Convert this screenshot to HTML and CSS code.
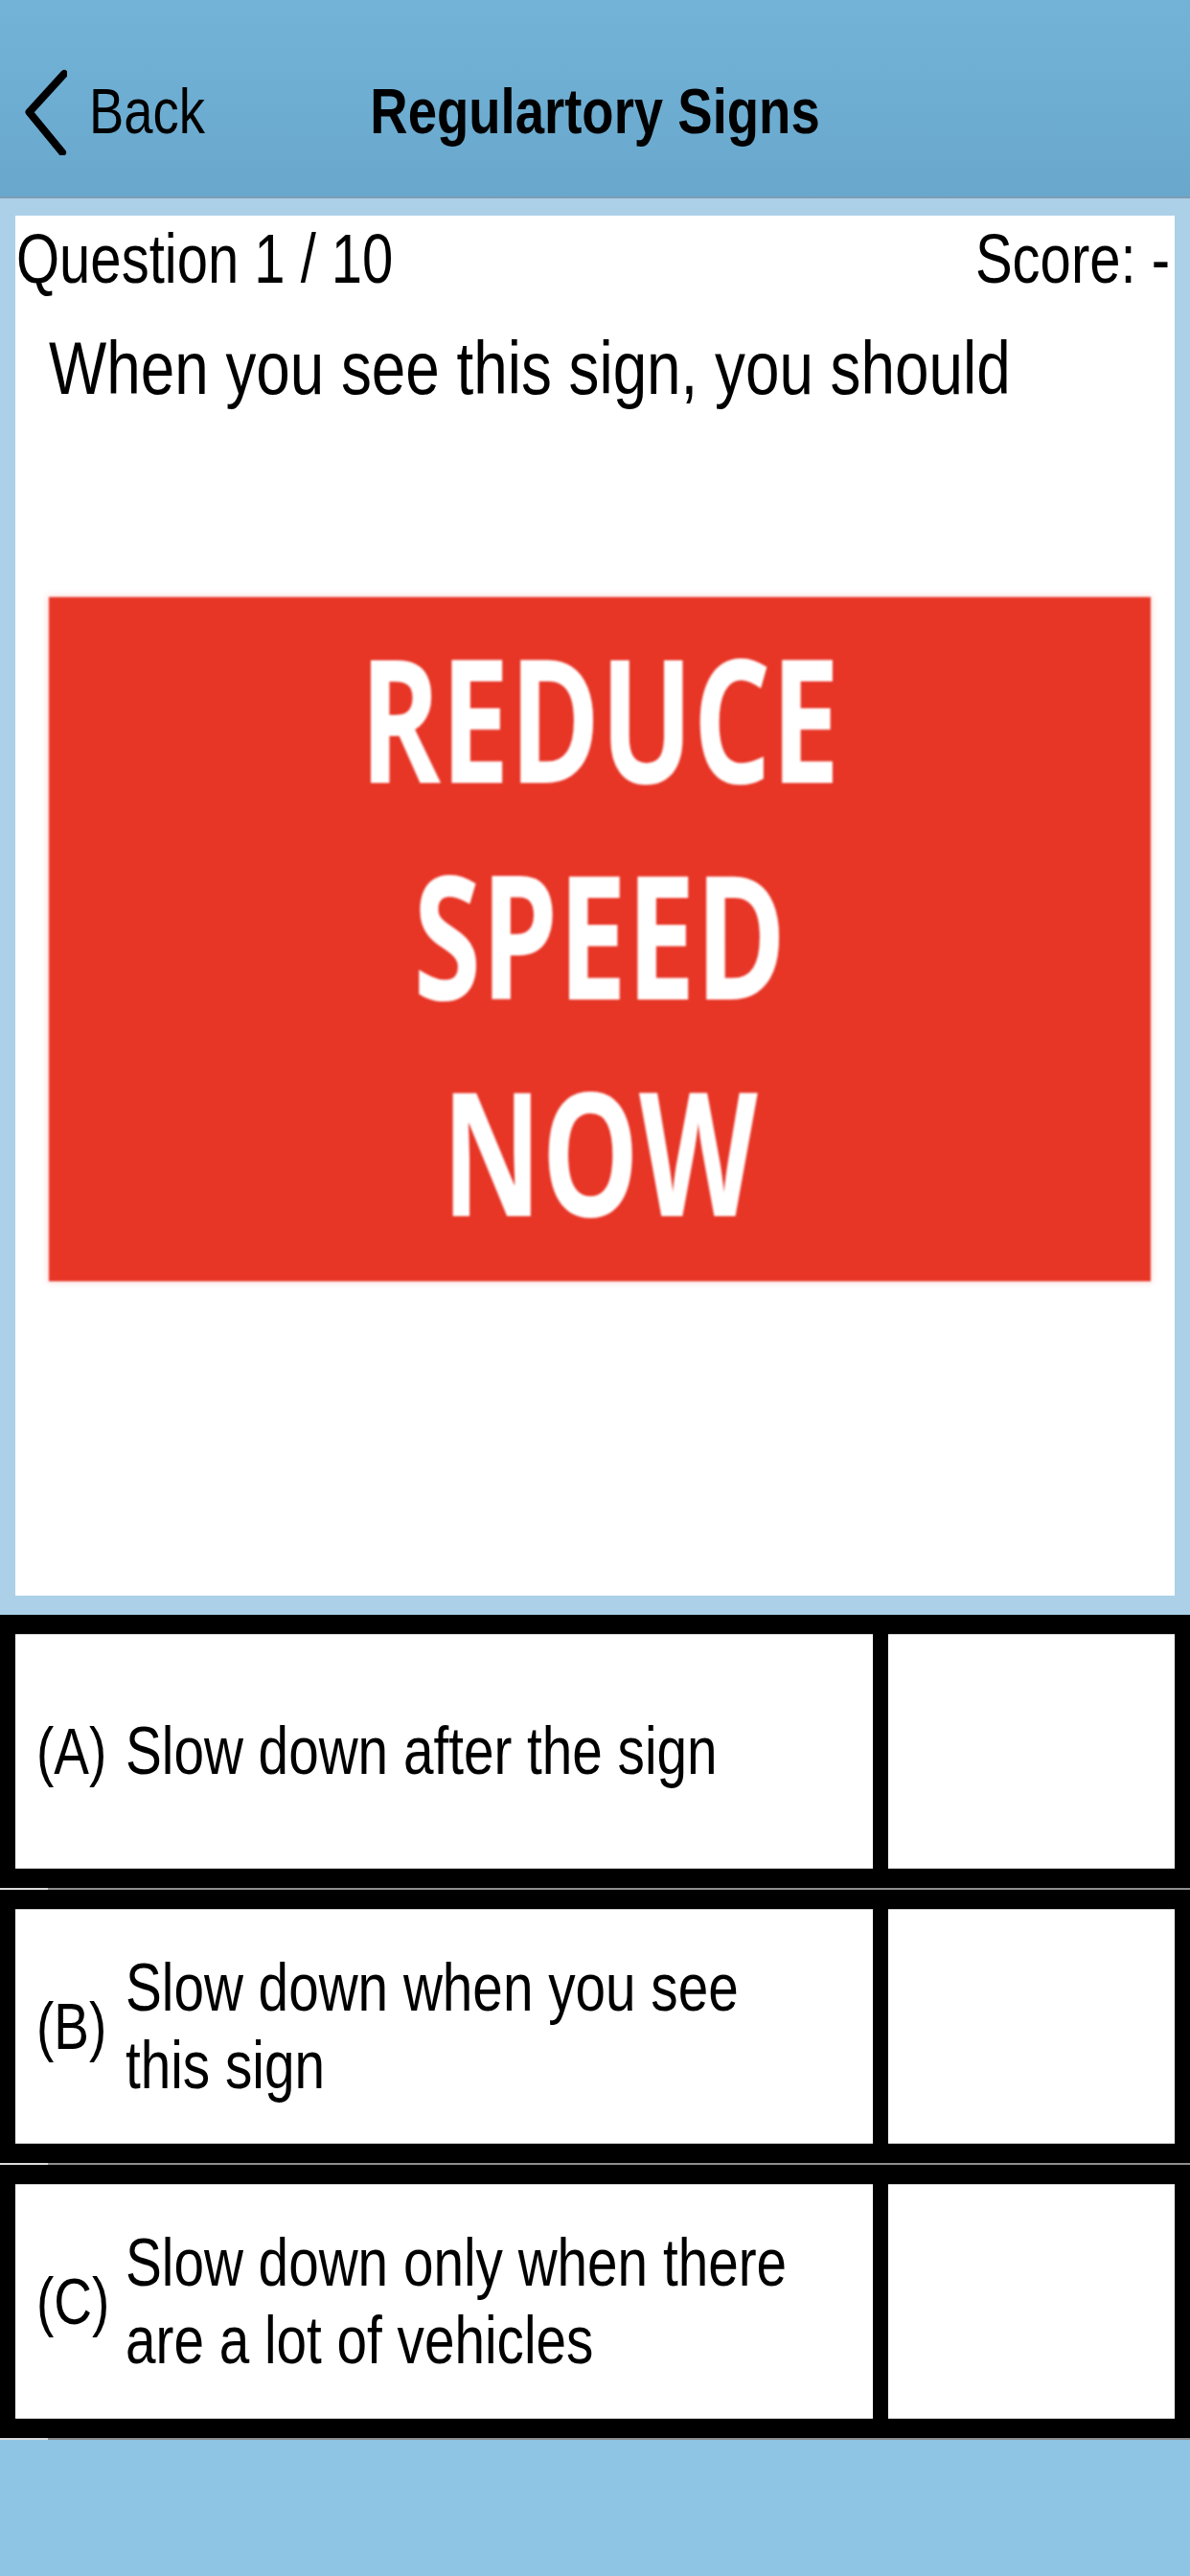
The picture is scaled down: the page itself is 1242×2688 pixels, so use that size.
FILE: index.html
```html
<!DOCTYPE html>
<html lang="en">
<head>
<meta charset="utf-8">
<title>Regulartory Signs</title>
<link rel="stylesheet" href="styles.css">
</head>
<body>
<header class="nav">
  <div class="nav-left">
    <svg class="chev" width="44" height="90" viewBox="0 0 44 90"><polyline points="41,5 4.5,45 39,87" fill="none" stroke="#000" stroke-width="8" stroke-linecap="round" stroke-linejoin="round"/></svg>
    <span class="back sy">Back</span>
  </div>
  <h1 class="title sy">Regulartory Signs</h1>
  <div class="nav-right"></div>
</header>
<main class="content">
  <section class="card">
    <div class="meta">
      <span class="sy">Question 1 / 10</span>
      <span class="sy">Score: -</span>
    </div>
    <p class="prompt sy">When you see this sign, you should</p>
    <div class="sign">
      <span class="sign-line">REDUCE</span>
      <span class="sign-line">SPEED</span>
      <span class="sign-line">NOW</span>
    </div>
  </section>
</main>
<section class="options">
  <div class="opt">
    <div class="cell text-cell"><span class="label sy">(A)</span><span class="otext sy">Slow down after the sign</span></div>
    <div class="cell check"></div>
  </div>
  <div class="opt">
    <div class="cell text-cell"><span class="label sy">(B)</span><span class="otext sy">Slow down when you see this sign</span></div>
    <div class="cell check"></div>
  </div>
  <div class="opt">
    <div class="cell text-cell"><span class="label sy">(C)</span><span class="otext sy">Slow down only when there are a lot of vehicles</span></div>
    <div class="cell check"></div>
  </div>
</section>
</body>
</html>
```
FILE: styles.css
```css
* { box-sizing: border-box; }
html, body { margin: 0; padding: 0; }
body {
  width: 1242px;
  min-height: 2688px;
  background: #8fc5e4;
  font-family: "Liberation Sans", Arial, sans-serif;
  color: #000;
}
.sy { display: inline-block; transform: scaleY(1.23); }

.nav {
  height: 207px;
  padding-top: 28px;
  background: linear-gradient(#73b3d8, #69a8cc);
  border-bottom: 2px solid #7d9db3;
  display: grid;
  grid-template-columns: 1fr auto 1fr;
  align-items: center;
}
.nav-left { display: flex; align-items: center; padding-left: 26px; }
.chev { display: block; }
.back { font-size: 54.4px; line-height: 66px; margin-left: 23px; }
.title { margin: 0; font-size: 54.5px; line-height: 66px; font-weight: 700; }

.content { background: #abd0e7; padding: 18px 16px 20px; }
.card { background: #fff; height: 1440px; padding: 10px 5px 0 1px; }
.meta {
  display: flex;
  justify-content: space-between;
  font-size: 58px;
  line-height: 70px;
}
.prompt {
  margin: 40px 0 0 34px;
  font-size: 63.8px;
  line-height: 78px;
  display: block;
}
.sign {
  margin: 200px 20px 0 34px;
  height: 714px;
  padding-bottom: 12px;
  background: #e73526;
  display: flex;
  flex-direction: column;
  align-items: center;
  justify-content: center;
  filter: blur(1.2px);
  box-shadow: 0 0 6px 2px rgba(231, 53, 38, 0.12);
}
.sign-line {
  display: block;
  font-family: "Open Sans", sans-serif;
  font-weight: 700;
  color: #fff;
  font-size: 128px;
  line-height: 226px;
  transform: scaleY(1.4);
}

.options { background: #000; }
.opt {
  display: grid;
  grid-template-columns: 895px 299px;
  column-gap: 16px;
  padding: 20px 16px 22px;
  background: linear-gradient(to right, #dcdcdc 50px, #8e8e8e 50px) left bottom / 100% 2px no-repeat, #000;
}
.cell {
  height: 245px;
  background: #fff;
  border-top: 1px solid #d2d2d2;
  border-bottom: 1px solid #d2d2d2;
}
.text-cell { display: flex; align-items: center; padding-left: 22px; }
.label { flex: 0 0 93px; font-size: 55px; line-height: 66px; }
.otext { width: 720px; font-size: 56.7px; line-height: 66px; }
```
